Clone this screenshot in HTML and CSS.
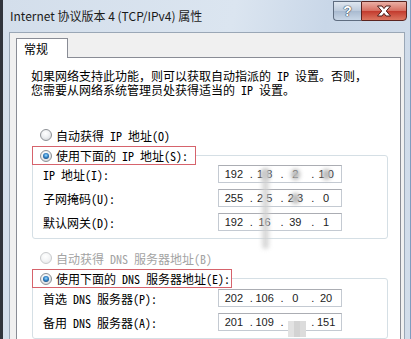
FILE: index.html
```html
<!DOCTYPE html>
<html lang="zh-CN">
<head>
  <meta charset="UTF-8" />
  <title>Internet 协议版本 4 (TCP/IPv4) 属性</title>
  <link rel="stylesheet" href="styles.css">
</head>
<body>
  <div class="window">
    <div class="titlebar">
      <span class="title">Internet 协议版本 4 (TCP/IPv4) 属性</span>
      <div class="caption">
        <span class="btn-help">?</span>
        <span class="btn-close">
          <svg width="16" height="12" viewBox="0 0 16 12">
            <path d="M1.5 1 H6 L8 3.6 L10 1 H14.5 L10.3 6 L14.5 11 H10 L8 8.4 L6 11 H1.5 L5.7 6 Z" fill="#fff" stroke="#4a1a16" stroke-width="1"/>
          </svg>
        </span>
      </div>
    </div>

    <div class="client">
      <div class="tabs"><span class="tab">常规</span></div>
      <div class="panel">
        <p class="intro">如果网络支持此功能，则可以获取自动指派的 IP 设置。否则，<br>您需要从网络系统管理员处获得适当的 IP 设置。</p>

        <div class="opt first"><span class="mark"></span>自动获得 IP 地址(O)</div>

        <fieldset class="group">
          <legend class="chosen ip"><span class="opt checked"><span class="mark"></span>使用下面的 IP 地址(S):</span></legend>
          <div class="field">
            <label>IP 地址(I):</label>
            <div class="ipbox"><span class="seg">192</span><span class="dot">.</span><span class="seg smudge">1 8</span><span class="dot">.</span><span class="seg smudge">2</span><span class="dot">.</span><span class="seg smudge">1 0</span></div>
          </div>
          <div class="field">
            <label>子网掩码(U):</label>
            <div class="ipbox"><span class="seg">255</span><span class="dot">.</span><span class="seg">2 5</span><span class="dot">.</span><span class="seg smudge">2 3</span><span class="dot">.</span><span class="seg">0</span></div>
          </div>
          <div class="field">
            <label>默认网关(D):</label>
            <div class="ipbox"><span class="seg">192</span><span class="dot">.</span><span class="seg">16</span><span class="dot">.</span><span class="seg">39</span><span class="dot">.</span><span class="seg">1</span></div>
          </div>
          <span class="smear"></span>
        </fieldset>

        <div class="opt disabled"><span class="mark"></span>自动获得 DNS 服务器地址(B)</div>

        <fieldset class="group">
          <legend class="chosen dns"><span class="opt checked"><span class="mark"></span>使用下面的 DNS 服务器地址(E):</span></legend>
          <div class="field">
            <label>首选 DNS 服务器(P):</label>
            <div class="ipbox"><span class="seg">202</span><span class="dot">.</span><span class="seg">106</span><span class="dot">.</span><span class="seg">0</span><span class="dot">.</span><span class="seg">20</span></div>
          </div>
          <div class="field">
            <label>备用 DNS 服务器(A):</label>
            <div class="ipbox"><span class="seg">201</span><span class="dot">.</span><span class="seg">109</span><span class="dot">.</span><span class="seg mosaic"></span><span class="dot">.</span><span class="seg">151</span></div>
          </div>
        </fieldset>
      </div>
    </div>
  </div>
</body>
</html>
```

FILE: styles.css
```css
* {
  box-sizing: border-box;
}

body {
  margin: 0;
  width: 411px;
  height: 339px;
  overflow: hidden;
  background: #2b2f36;
  font-family: "Noto Sans Mono CJK SC", "Noto Sans CJK SC", sans-serif;
  font-size: 12px;
  color: #000;
}

.window {
  width: 411px;
  height: 339px;
  display: flex;
  flex-direction: column;
  border-left: 3px solid #30343c;
  border-right: 1px solid #7f9dc0;
  background: linear-gradient(100deg, #d3deeb 0%, #dbe5f0 50%, #c9d7e8 70%, #d2ddea 100%);
}

/* title bar */
.titlebar {
  display: flex;
  height: 32px;
  flex: none;
}

.title {
  font-family: "Noto Sans CJK SC", sans-serif;
  font-size: 12px;
  line-height: 32px;
  padding-left: 7px;
  color: #1a1a1a;
}

.caption {
  display: flex;
  margin-left: auto;
  margin-right: 3px;
  margin-top: 1px;
}

.btn-help,
.btn-close {
  height: 20px;
  display: flex;
  align-items: center;
  justify-content: center;
}

.btn-help {
  width: 28px;
  border: 1px solid #5f6d80;
  border-right: none;
  border-radius: 0 0 0 4px;
  background: linear-gradient(#dfe7f0, #bccadb 50%, #a9bad0 51%, #c9d7e7);
  font-family: "Liberation Sans", sans-serif;
  font-weight: bold;
  font-size: 14px;
  color: #fff;
  text-shadow: 0 0 1px #34404f, 0 0 1px #34404f, 0 0 1px #34404f;
}

.btn-close {
  width: 46px;
  border: 1px solid #5a2420;
  border-radius: 0 0 4px 0;
  background: linear-gradient(#eab0a6, #d66d5f 50%, #c23a2d 51%, #dc7660);
}

/* client area */
.client {
  flex: 1;
  display: flex;
  flex-direction: column;
  margin: 0 5px 0 6px;
  padding: 5px 3px 0 6px;
  border: 1px solid #9aa7b6;
  border-bottom: none;
  background: #f0f0f0;
}

.tabs {
  display: flex;
  position: relative;
  z-index: 1;
  margin-bottom: -1px;
}

.tab {
  width: 52px;
  height: 20px;
  padding-left: 7px;
  line-height: 19px;
  border: 1px solid #898c95;
  border-bottom: none;
  background: #fff;
}

.panel {
  flex: 1;
  padding: 11px 0 0 15px;
  border: 1px solid #898c95;
  border-bottom: none;
  background: #fff;
}

.intro {
  margin: 0 0 0 -1px;
  line-height: 14px;
  white-space: nowrap;
}

/* radio options */
.opt {
  display: flex;
  align-items: center;
  gap: 4px;
  height: 18px;
  padding-left: 8px;
  white-space: nowrap;
}

.opt.first {
  margin-top: 29px;
}

.opt.disabled {
  margin-top: 10px;
  color: #a3a3a3;
}

.mark {
  position: relative;
  flex: none;
  width: 12px;
  height: 12px;
  border-radius: 50%;
  border: 1px solid #8d9196;
  background: radial-gradient(circle at 45% 35%, #fff 0, #eef0f2 45%, #c9ccd0 100%);
}

.disabled .mark {
  border-color: #c9cbcd;
  background: radial-gradient(circle at 45% 35%, #fff 0, #f4f5f6 50%, #e1e3e5 100%);
}

.checked .mark::after {
  content: "";
  position: absolute;
  left: 2px;
  top: 2px;
  width: 6px;
  height: 6px;
  border-radius: 50%;
  background: radial-gradient(circle at 50% 40%, #9fdcff 0, #2f80c6 45%, #0e2b4c 100%);
}

/* group boxes */
.group {
  position: relative;
  width: 356px;
  min-width: 0;
  margin: 2px 0 0;
  padding: 0 0 7px;
  border: 1px solid #d5dfe5;
  border-radius: 3px;
}

.chosen {
  height: 19px;
  margin-left: -1px;
  padding: 0;
  border: 1px solid #d6636c;
  background: #fff;
}

.chosen .opt {
  padding-left: 7px;
  height: 17px;
}

.chosen.ip {
  width: 164px;
}

.chosen.dns {
  width: 200px;
}

.field {
  display: flex;
  align-items: center;
  height: 18px;
  margin-top: 6px;
}

.ip ~ .field:first-of-type {
  margin-top: 0;
}

.dns ~ .field:first-of-type {
  margin-top: 1px;
}

.field label {
  flex: none;
  width: 185px;
  padding-left: 10px;
  white-space: nowrap;
}

.ipbox {
  display: flex;
  align-items: center;
  width: 124px;
  height: 18px;
  border: 1px solid #c4cad2;
  border-top-color: #abadb3;
  background: #fff;
  font-family: "Liberation Sans", sans-serif;
  font-size: 11px;
  color: #222;
}

.seg {
  position: relative;
  flex: 1;
  text-align: center;
  white-space: pre;
}

.dot {
  width: 0;
  padding-left: 1px;
  white-space: nowrap;
}

.smudge::after {
  content: "";
  position: absolute;
  left: 50%;
  top: 50%;
  width: 9px;
  height: 11px;
  margin: -5px 0 0 -4px;
  border-radius: 50%;
  background: #b9b9b9;
  filter: blur(2px);
}

.mosaic::after {
  content: "";
  position: absolute;
  left: 7px;
  top: -1px;
  width: 18px;
  height: 16px;
  background: linear-gradient(90deg, #e2e2e2 0 6px, #d3d3d3 6px 12px, #dcdcdc 12px);
}

/* smear over the address fields */
.smear {
  position: absolute;
  left: 229px;
  top: 4px;
  width: 7px;
  height: 80px;
  border-radius: 4px;
  background: #cfcfcf;
  opacity: 0.8;
  filter: blur(2px);
}
```
